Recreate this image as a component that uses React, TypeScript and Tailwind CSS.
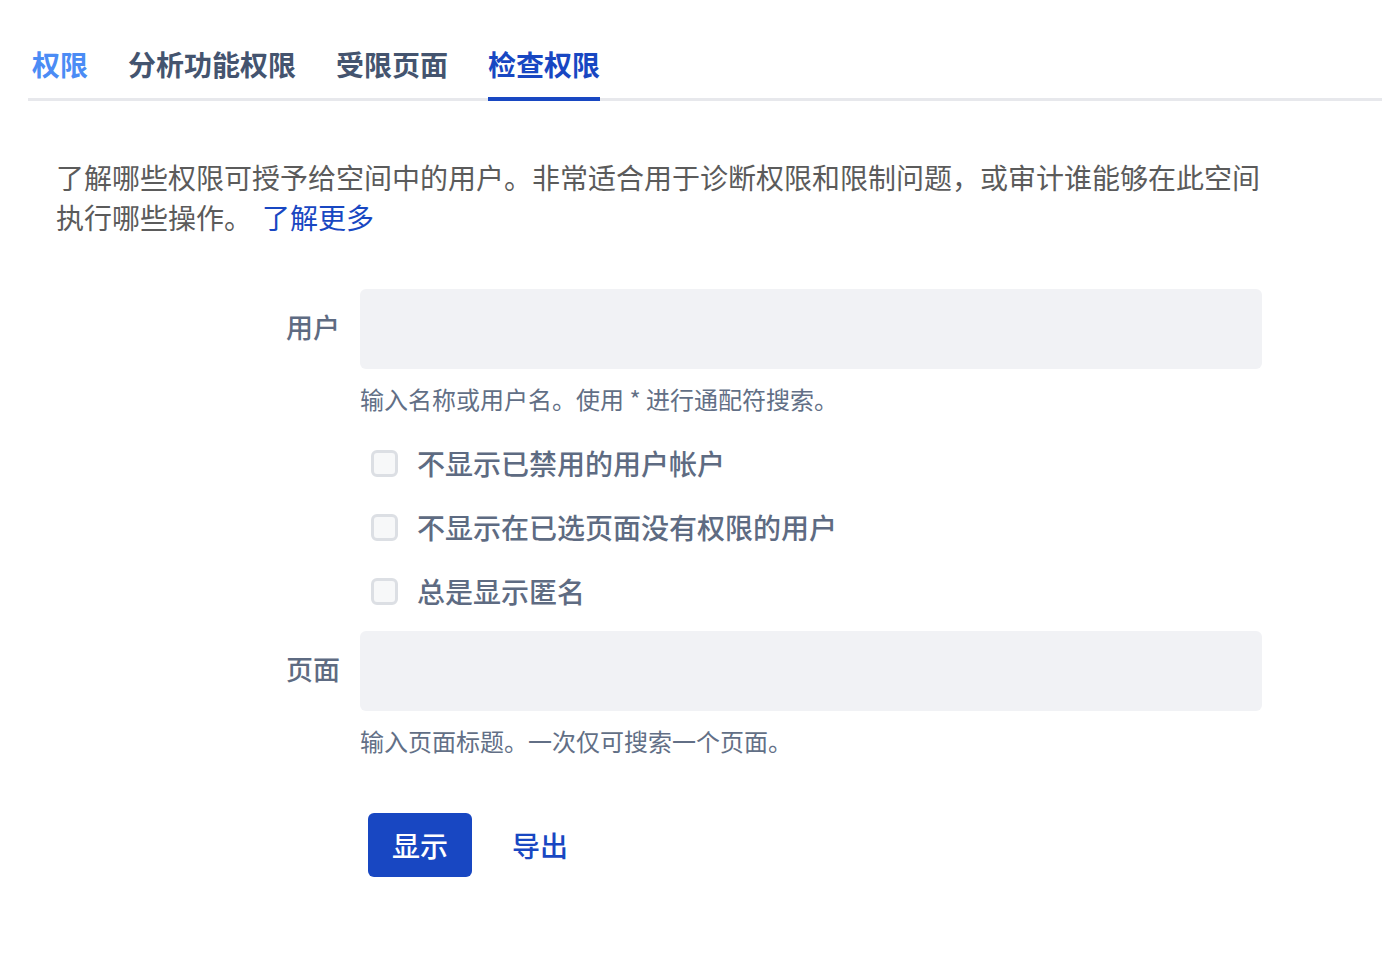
const font = { fontFamily: '"Noto Sans CJK SC", "Noto Sans", sans-serif' };

const tabs = [
  { label: "权限", cls: "text-[#4b8cf5]" },
  { label: "分析功能权限", cls: "text-[#44546f]" },
  { label: "受限页面", cls: "text-[#44546f]" },
  { label: "检查权限", cls: "text-[#1847c2]", active: true },
];

const options = ["不显示已禁用的用户帐户", "不显示在已选页面没有权限的用户", "总是显示匿名"];

function Field({ label, hint }: { label: string; hint: string }) {
  return (
    <div className="flex">
      <div className="w-[360px] shrink-0 pr-[20px] pt-[20px] text-right text-[27px] leading-[36px] font-medium text-[#5e6b82]">{label}</div>
      <div className="flex-1">
        <div className="h-[80px] w-[902px] rounded-[6px] bg-[#f1f2f5]" />
        <p className="mt-[14px] text-[24px] leading-[32px] text-[#626f86]">{hint}</p>
      </div>
    </div>
  );
}

export default function App() {
  return (
    <div className="min-h-screen bg-white" style={font}>
      <div className="pl-[28px] pt-[44px]">
        <div className="flex gap-[40px] border-b-[3px] border-[#e7e8ec] pl-[4px]">
          {tabs.map((tab) => (
            <div key={tab.label} className={`relative pb-[14px] text-[28px] leading-[40px] font-semibold ${tab.cls}`}>
              {tab.label}
              {tab.active ? <div className="absolute bottom-[-3px] left-0 right-0 h-[4px] bg-[#1847c2]" /> : null}
            </div>
          ))}
        </div>
      </div>

      {/* intro copy; link sits inline after the second line */}
      <p className="mt-[56px] w-[1276px] pl-[56px] text-[28px] leading-[40px] text-[#5b5b5b]">
        <span>了解哪些权限可授予给空间中的用户。非常适合用于诊断权限和限制问题，或审计谁能够在此空间执行哪些操作。</span>
        <a className="ml-[10px] text-[#1847c2]">了解更多</a>
      </p>

      <div className="mt-[52px] flex flex-col">
        <Field label="用户" hint="输入名称或用户名。使用 * 进行通配符搜索。" />
        <div className="mt-[30px] flex flex-col gap-[28px] pl-[371px]">
          {options.map((opt) => (
            <label key={opt} className="flex items-center gap-[19px]">
              <span className="h-[27px] w-[27px] rounded-[6px] border-[3px] border-[#dcdfe4] bg-[#f7f8f9]" />
              <span className="text-[28px] leading-[36px] font-medium text-[#5e6b82]">{opt}</span>
            </label>
          ))}
        </div>
        <div className="mt-[22px]">
          <Field label="页面" hint="输入页面标题。一次仅可搜索一个页面。" />
        </div>
        <div className="mt-[56px] flex items-center gap-[40px] pl-[368px]">
          <button className="h-[64px] w-[104px] rounded-[6px] bg-[#1847c2] text-[28px] font-medium text-white">显示</button>
          <span className="text-[28px] font-medium text-[#1847c2]">导出</span>
        </div>
      </div>
    </div>
  );
}
